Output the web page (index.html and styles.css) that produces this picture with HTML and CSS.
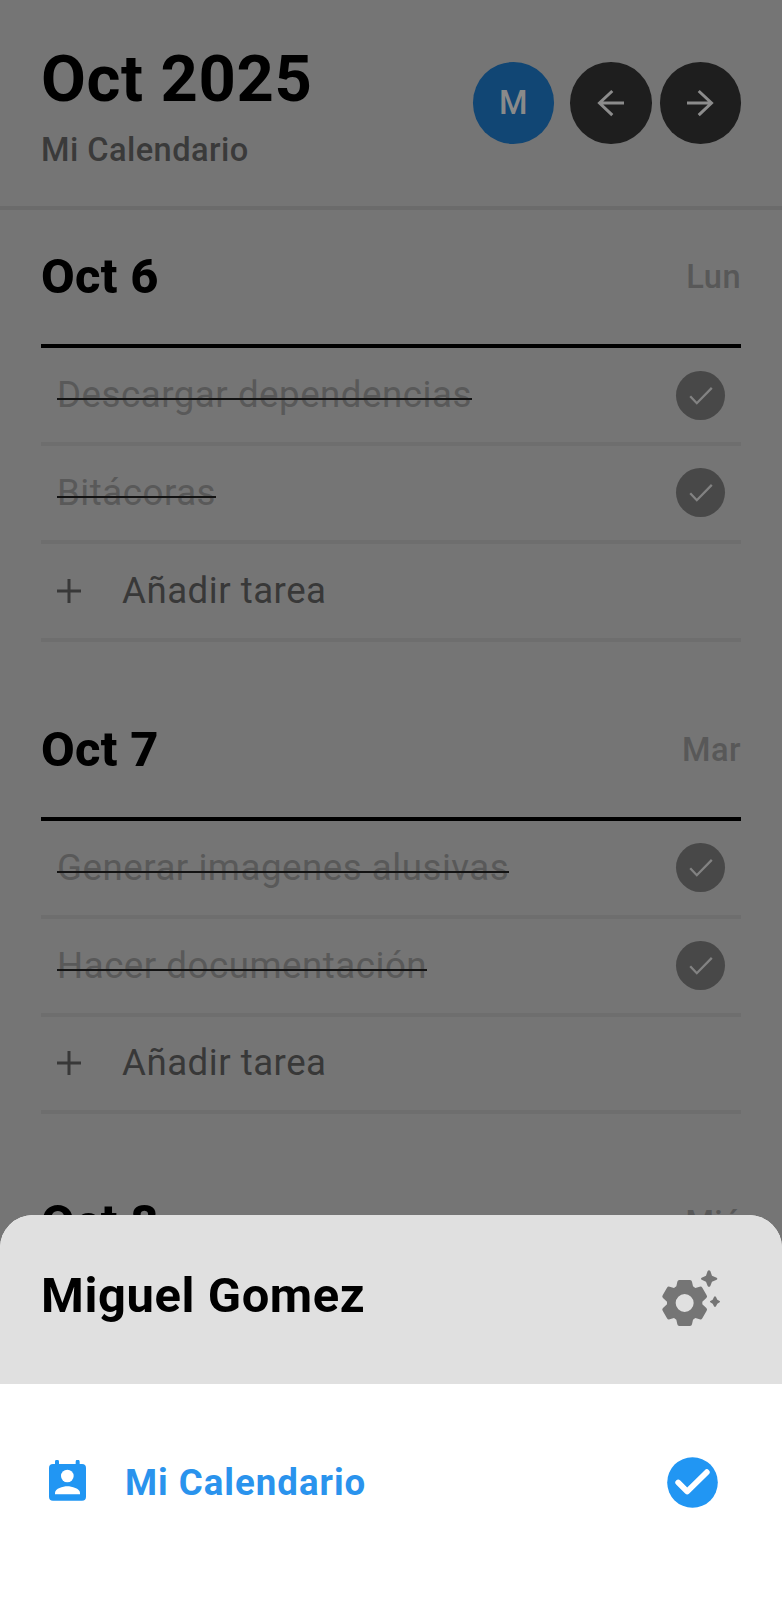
FILE: index.html
```html
<!DOCTYPE html>
<html lang="es">
<head>
<meta charset="utf-8">
<title>Mi Calendario</title>
<link rel="stylesheet" href="styles.css">
</head>
<body>
<svg class="defs" width="0" height="0" aria-hidden="true">
  <symbol id="tick" viewBox="0 0 49 49"><path d="M14.200 25.200l6.600 7 15-15.300" fill="none" stroke="#828282" stroke-width="2.300"/></symbol>
  <symbol id="plus" viewBox="0 0 24 24"><path d="M0 12h24M12 0v24" fill="none" stroke="#383838" stroke-width="3"/></symbol>
</svg>
<main class="app">
  <header class="top">
    <div class="heading">
      <h1 class="title">Oct 2025</h1>
      <p class="subtitle">Mi Calendario</p>
    </div>
    <div class="actions">
      <button class="round avatar">M</button>
      <button class="round nav"><svg width="40" height="40" viewBox="0 0 40 40"><path d="M33 20H8.500M21.300 8L8.500 20l12.800 12.200" /></svg></button>
      <button class="round nav"><svg width="40" height="40" viewBox="0 0 40 40"><path d="M7 20h24.500M18.700 8L31.500 20l-12.800 12.200" /></svg></button>
    </div>
  </header>
  <section class="day">
    <div class="day-head"><h2 class="date">Oct 6</h2><span class="weekday">Lun</span></div>
    <div class="row"><span class="task">Descargar dependencias</span><span class="done"><svg width="49" height="49"><use href="#tick"/></svg></span></div>
    <div class="row"><span class="task">Bitácoras</span><span class="done"><svg width="49" height="49"><use href="#tick"/></svg></span></div>
    <div class="row add"><svg width="24" height="24"><use href="#plus"/></svg><span class="add-label">Añadir tarea</span></div>
  </section>
  <section class="day">
    <div class="day-head"><h2 class="date">Oct 7</h2><span class="weekday">Mar</span></div>
    <div class="row"><span class="task">Generar imagenes alusivas</span><span class="done"><svg width="49" height="49"><use href="#tick"/></svg></span></div>
    <div class="row"><span class="task">Hacer documentación</span><span class="done"><svg width="49" height="49"><use href="#tick"/></svg></span></div>
    <div class="row add"><svg width="24" height="24"><use href="#plus"/></svg><span class="add-label">Añadir tarea</span></div>
  </section>
  <section class="day">
    <div class="day-head"><h2 class="date">Oct 8</h2><span class="weekday">Mié</span></div>
  </section>
  <aside class="sheet">
    <div class="sheet-head">
      <h2 class="user">Miguel Gomez</h2>
      <svg class="gear" width="61.67" height="58.33" viewBox="180 265 185 175">
        <path fill-rule="evenodd" d="M238 298H270Q275 298 276 303L279 317L286 322L299 318Q304 316 307 321L320 344Q323 349 319 352L307 363V371L319 382Q323 385 320 390L307 413Q304 418 299 416L286 412L279 417L276 431Q275 436 270 436H238Q233 436 232 431L229 417L222 412L209 416Q204 418 201 413L188 390Q185 385 189 382L201 371V363L189 352Q185 349 188 344L201 321Q204 316 209 318L222 322L229 317L232 303Q233 298 238 298ZM254 340a27 27 0 1 0 0 54a27 27 0 1 0 0-54Z"/>
        <path d="M323 271Q327 266 331 271L336 285L350 291Q354 294 350 297L336 303L331 316Q327 321 323 316L318 303L305 297Q301 294 305 291L318 285ZM342 349Q345 345 348 349L352 357L359 361Q361 363 359 365L352 369L348 377Q345 381 342 377L338 369L331 365Q329 363 331 361L338 357Z"/>
      </svg>
    </div>
    <div class="calendar">
      <svg class="person" width="37" height="41" viewBox="0 0 111 123">
        <path fill="#2196f3" d="M18 12V5a6 6 0 0 1 12 0v7h50V5a6 6 0 0 1 12 0v7h7a12 12 0 0 1 12 12v86a12 12 0 0 1-12 12H12a12 12 0 0 1-12-12V24a12 12 0 0 1 12-12Z"/>
        <circle cx="55" cy="48" r="19" fill="#fff"/><path fill="#fff" d="M18 103v-5c0-12 24-19 37-19s38 7 38 19v5Z"/>
      </svg>
      <span class="calendar-name">Mi Calendario</span>
      <svg class="selected" width="51" height="51" viewBox="0 0 51 51"><circle cx="25.500" cy="25.500" r="25.300" fill="#2196f3"/><path d="M11.200 25.500l9 9L39.800 15.200" fill="none" stroke="#fff" stroke-width="5.800" stroke-linecap="round" stroke-linejoin="round"/></svg>
    </div>
  </aside>
</main>
</body>
</html>
```
FILE: styles.css
```css
* { box-sizing: border-box; }
body { margin: 0; font-family: Roboto, sans-serif; background: #757575; }
h1, h2, p { margin: 0; }
.defs { position: absolute; }
.app { position: relative; width: 782px; height: 1600px; overflow: hidden; background: #757575; }
.top { display: flex; justify-content: space-between; height: 210px; padding: 42px 41px 0; border-bottom: 4px solid #6b6b6b; }
.heading { display: flex; flex-direction: column; gap: 13px; }
.title { font-size: 65.100px; line-height: 75px; padding-bottom: 1px; font-weight: 700; letter-spacing: 0.650px; color: #000; white-space: nowrap; }
.subtitle { font-size: 32.600px; line-height: 38px; font-weight: 500; letter-spacing: 0.450px; color: #3a3a3a; }
.actions { display: flex; padding-top: 20px; }
.round { display: flex; align-items: center; justify-content: center; width: 81.500px; height: 81.500px; padding: 0; border: 0; border-radius: 50%; background: #1e1e1e; margin-left: 8px; }
.avatar { background: #114674; color: #8a8a8a; font: 500 32.600px/38px Roboto, sans-serif; margin-right: 8px; }
.nav path { fill: none; stroke: #8c8c8c; stroke-width: 3; }
.day { margin: 0 41px 41px; }
.day-head { display: flex; align-items: center; justify-content: space-between; height: 138.300px; border-bottom: 4px solid #000; }
.date { font-size: 48.900px; line-height: 56px; font-weight: 800; letter-spacing: 0.300px; color: #000; }
.weekday { font-size: 32.600px; line-height: 38px; font-weight: 500; letter-spacing: 0.450px; color: #585858; }
.row { display: flex; align-items: center; justify-content: space-between; height: 97.800px; padding: 0 16px; border-bottom: 4px solid #6e6e6e; }
.task { position: relative; font-size: 36.650px; line-height: 42px; letter-spacing: 0.530px; color: #595959; white-space: nowrap; }
.task::after { content: ""; position: absolute; left: 0; right: 0; top: 24px; height: 2px; background: #131313; }
.done { display: flex; width: 49px; height: 49px; border-radius: 50%; background: #484848; }
.add { justify-content: flex-start; gap: 41px; }
.add-label { font-size: 36.650px; line-height: 42px; letter-spacing: 0.500px; color: #383838; }
.sheet { position: absolute; left: 0; right: 0; bottom: 0; height: 385px; border-radius: 33px 33px 0 0; overflow: hidden; background: #fff; }
.sheet-head { display: flex; justify-content: space-between; align-items: center; height: 169px; padding: 0 60px 0 41px; background: #e0e0e0; }
.user { font-size: 48.900px; line-height: 56px; font-weight: 700; letter-spacing: 0.600px; color: #000; padding-bottom: 7px; }
.gear { fill: #757575; margin-bottom: 3px; }
.calendar { display: flex; align-items: center; height: 196px; padding: 0 64px 0 49px; }
.person { margin-bottom: 4px; }
.calendar-name { margin-left: 39px; padding-top: 2px; font-size: 36.650px; line-height: 42px; font-weight: 700; letter-spacing: 0.980px; color: #2a93ed; }
.selected { margin-left: auto; }
```
